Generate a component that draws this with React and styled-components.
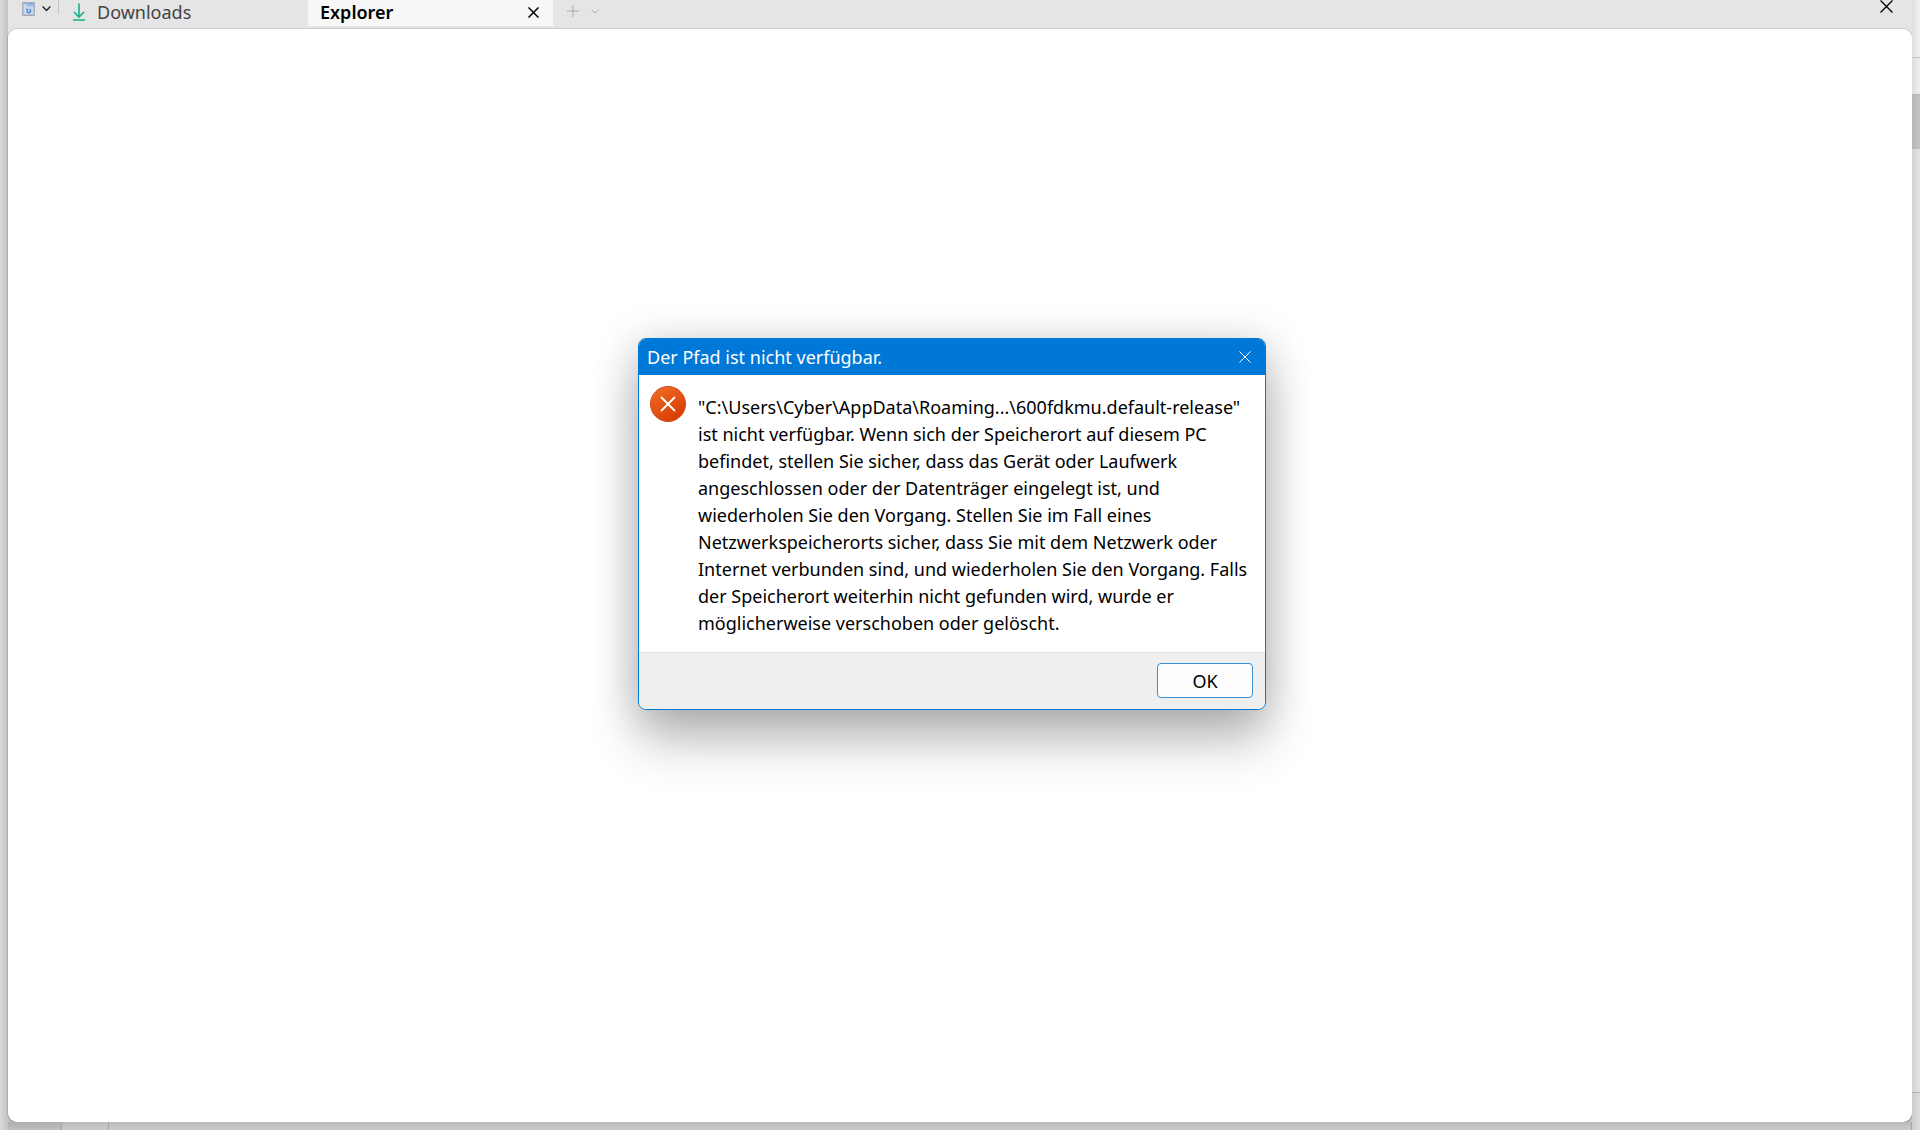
import React from 'react';
import styled, { createGlobalStyle } from 'styled-components';

const message = [
  '"C:\\Users\\Cyber\\AppData\\Roaming...\\600fdkmu.default-release"',
  'ist nicht verfügbar. Wenn sich der Speicherort auf diesem PC',
  'befindet, stellen Sie sicher, dass das Gerät oder Laufwerk',
  'angeschlossen oder der Datenträger eingelegt ist, und',
  'wiederholen Sie den Vorgang. Stellen Sie im Fall eines',
  'Netzwerkspeicherorts sicher, dass Sie mit dem Netzwerk oder',
  'Internet verbunden sind, und wiederholen Sie den Vorgang. Falls',
  'der Speicherort weiterhin nicht gefunden wird, wurde er',
  'möglicherweise verschoben oder gelöscht.',
].join('\n');

function CrossIcon({ size, stroke }) {
  return (
    <svg width={size} height={size} viewBox="0 0 12 12" fill="none" stroke="currentColor" strokeWidth={stroke}>
      <path d="M0.5 0.5L11.5 11.5M11.5 0.5L0.5 11.5" />
    </svg>
  );
}

function ChevronIcon({ width, stroke }) {
  return (
    <svg width={width} height={width / 2 + 1} viewBox="0 0 8 5" fill="none" stroke="currentColor" strokeWidth={stroke}>
      <path d="M0.5 0.5L4 4L7.5 0.5" />
    </svg>
  );
}

function TabsIcon() {
  return (
    <svg width="13" height="14" viewBox="0 0 13 14" fill="none">
      <path d="M0.8 0.8H12.2V13.2H0.8Z" fill="#c9d8ee" stroke="#a2abb9" strokeWidth="1.4" />
      <path d="M1.5 1.5H5V4H11.5" stroke="#8fb0df" strokeWidth="1" />
      <path d="M6.5 2H11.5" stroke="#7a9fd8" strokeWidth="1.6" />
      <path d="M5.2 6.6V8.6A1.7 1.7 0 1 0 7.4 7.4" stroke="#4a83da" strokeWidth="1.4" />
    </svg>
  );
}

function DownloadIcon() {
  return (
    <svg width="14" height="18" viewBox="0 0 14 18" fill="none" stroke="#16b08f" strokeWidth="1.6">
      <path d="M7 0.5V14M2 9L7 14L12 9M1 17H13" />
    </svg>
  );
}

function ErrorIcon() {
  return (
    <svg width="36" height="36" viewBox="0 0 36 36" fill="none">
      <defs>
        <linearGradient id="error-fill" x1="0.2" y1="0" x2="0.8" y2="1">
          <stop offset="0" stopColor="#f06a25" />
          <stop offset="1" stopColor="#d63a00" />
        </linearGradient>
      </defs>
      <circle cx="18" cy="18" r="17.5" fill="url(#error-fill)" stroke="#cf4a18" />
      <path d="M11.5 11.5L24.5 24.5M24.5 11.5L11.5 24.5" stroke="#fff" strokeWidth="1.8" strokeLinecap="round" />
    </svg>
  );
}

function App() {
  return (
    <>
      <GlobalStyle />
      <Desktop>
        <LeftEdge />
        <Window>
          <TabBar>
            <TabMenuButton aria-label="Tabs">
              <TabsIcon />
              <ChevronIcon width={9} stroke={1.3} />
            </TabMenuButton>
            <Separator />
            <Tab>
              <DownloadIcon />
              <TabName>Downloads</TabName>
            </Tab>
            <Tab $active>
              <TabName>Explorer</TabName>
              <IconButton aria-label="Close tab">
                <CrossIcon size={11} stroke={1.6} />
              </IconButton>
            </Tab>
            <NewTab>
              <IconButton aria-label="New tab">
                <svg width="12" height="12" viewBox="0 0 12 12" stroke="currentColor">
                  <path d="M6 0V12M0 6H12" />
                </svg>
              </IconButton>
              <IconButton aria-label="More tabs">
                <ChevronIcon width={8} stroke={1} />
              </IconButton>
            </NewTab>
            <CloseWindow aria-label="Close">
              <CrossIcon size={13} stroke={1.2} />
            </CloseWindow>
          </TabBar>
          <Canvas>
            <Dialog role="alertdialog" aria-labelledby="dialog-title" aria-describedby="dialog-text">
              <DialogHeader>
                <DialogTitle id="dialog-title">Der Pfad ist nicht verfügbar.</DialogTitle>
                <IconButton aria-label="Schließen">
                  <CrossIcon size={12} stroke={1} />
                </IconButton>
              </DialogHeader>
              <DialogBody>
                <ErrorIcon />
                <Message id="dialog-text">{message}</Message>
              </DialogBody>
              <DialogFooter>
                <OkButton>OK</OkButton>
              </DialogFooter>
            </Dialog>
          </Canvas>
        </Window>
        <RightEdge>
          <EdgeBlock $height="57px" $color="#f1f1f1" />
          <EdgeBlock $height="37px" $color="#efefef" $line="#c4c4c4" />
          <EdgeBlock $height="55px" $color="#c5c5c5" $line="#b4b4b4" />
          <EdgeBlock $grow $color="#e4e4e4" />
          <EdgeBlock $height="38px" $color="#dedede" $line="#b0b0b0" />
        </RightEdge>
        <BottomEdge>
          <BottomBlock $width="54px" $color="#bdbdbd" />
          <BottomBlock $width="47px" $color="#cbcbcb" />
          <BottomBlock $grow $color="#cbcbcb" />
        </BottomEdge>
      </Desktop>
    </>
  );
}

export default App;

const GlobalStyle = createGlobalStyle`
  * {
    box-sizing: border-box;
  }

  body {
    margin: 0;
    overflow: hidden;
    font-family: 'Noto Sans', 'Open Sans', sans-serif;
    font-size: 18px;
    color: #000;
  }

  button {
    font: inherit;
    color: inherit;
  }
`;

const Desktop = styled.div`
  display: grid;
  grid-template-columns: 8px 1fr 8px;
  grid-template-rows: 1fr 8px;
  height: 100vh;
  background: #c8c8c8;
`;

const LeftEdge = styled.div`
  grid-row: 1 / 3;
  background: linear-gradient(90deg, #dadada, #c2c2c2);
`;

const Window = styled.main`
  display: flex;
  flex-direction: column;
  min-width: 0;
  background: linear-gradient(#e5e5e5 50%, #c2c2c2 50%);
`;

const TabBar = styled.header`
  display: flex;
  align-items: flex-start;
  height: 29px;
  background: #e5e5e5;
`;

const TabMenuButton = styled.button`
  display: flex;
  align-items: center;
  gap: 7px;
  height: 18px;
  margin-left: 14px;
  padding: 0;
  border: 0;
  background: none;
  color: #222;
`;

const Separator = styled.div`
  width: 1px;
  height: 14px;
  margin: 0 13px 0 7px;
  background: #c4c4c4;
`;

const Tab = styled.div`
  display: flex;
  align-items: center;
  gap: 11px;
  width: ${(props) => (props.$active ? '245px' : '236px')};
  height: 26px;
  padding: ${(props) => (props.$active ? '0 14px 2px 12px' : '0 0 2px')};
  background: ${(props) => (props.$active ? '#f7f7f7' : 'none')};
  color: ${(props) => (props.$active ? '#000' : '#444')};
  font-weight: ${(props) => (props.$active ? 600 : 400)};
`;

const TabName = styled.span`
  flex: 1;
  line-height: 24px;
`;

const IconButton = styled.button`
  display: flex;
  padding: 0;
  border: 0;
  background: none;
`;

const NewTab = styled.div`
  display: flex;
  align-items: center;
  gap: 12px;
  height: 22px;
  margin-left: 14px;
  color: #aaa;
`;

const CloseWindow = styled(IconButton)`
  margin-left: auto;
  margin-right: 19px;
`;

const Canvas = styled.section`
  display: flex;
  flex: 1;
  align-items: center;
  justify-content: center;
  padding: 0 16px 103px 0;
  background: #fff;
  border-radius: 9px;
  box-shadow: 0 1px 1px 0 #8c8c8c, 0 0 0 1px rgba(0, 0, 0, 0.1);
`;

const Dialog = styled.div`
  width: 628px;
  overflow: hidden;
  background: #fff;
  border: 1px solid #0078d4;
  border-radius: 8px;
  box-shadow: 0 32px 50px rgba(0, 0, 0, 0.24), 0 4px 44px rgba(0, 0, 0, 0.18);
`;

const DialogHeader = styled.div`
  display: flex;
  align-items: center;
  justify-content: space-between;
  height: 36px;
  padding: 0 14px 0 8px;
  background: #0078d7;
  color: #fff;
`;

const DialogTitle = styled.h1`
  margin: 0;
  font-size: 18px;
  font-weight: 400;
`;

const DialogBody = styled.div`
  display: flex;
  gap: 12px;
  padding: 11px 0 15px 11px;

  svg {
    flex: none;
  }
`;

const Message = styled.p`
  margin: 0;
  padding-top: 8px;
  line-height: 27px;
  white-space: pre;
`;

const DialogFooter = styled.div`
  display: flex;
  justify-content: flex-end;
  padding: 10px 12px 11px;
  background: #efefef;
  border-top: 1px solid #e3e3e3;
`;

const OkButton = styled.button`
  width: 96px;
  height: 35px;
  padding: 0;
  background: #fdfdfd;
  border: 1px solid #3c91d6;
  border-radius: 4px;
`;

const RightEdge = styled.div`
  display: flex;
  grid-row: 1 / 3;
  grid-column: 3;
  flex-direction: column;
`;

const EdgeBlock = styled.div`
  flex: ${(props) => (props.$grow ? 1 : 'none')};
  height: ${(props) => props.$height};
  background: linear-gradient(90deg, rgba(0, 0, 0, 0.08), transparent), ${(props) => props.$color};
  border-top: ${(props) => (props.$line ? `1px solid ${props.$line}` : 0)};
`;

const BottomEdge = styled.div`
  display: flex;
  grid-row: 2;
  grid-column: 2;
`;

const BottomBlock = styled.div`
  flex: ${(props) => (props.$grow ? 1 : 'none')};
  width: ${(props) => props.$width};
  background: linear-gradient(rgba(0, 0, 0, 0.08), transparent), ${(props) => props.$color};
  border-right: 1px solid #a4a4a4;
`;
